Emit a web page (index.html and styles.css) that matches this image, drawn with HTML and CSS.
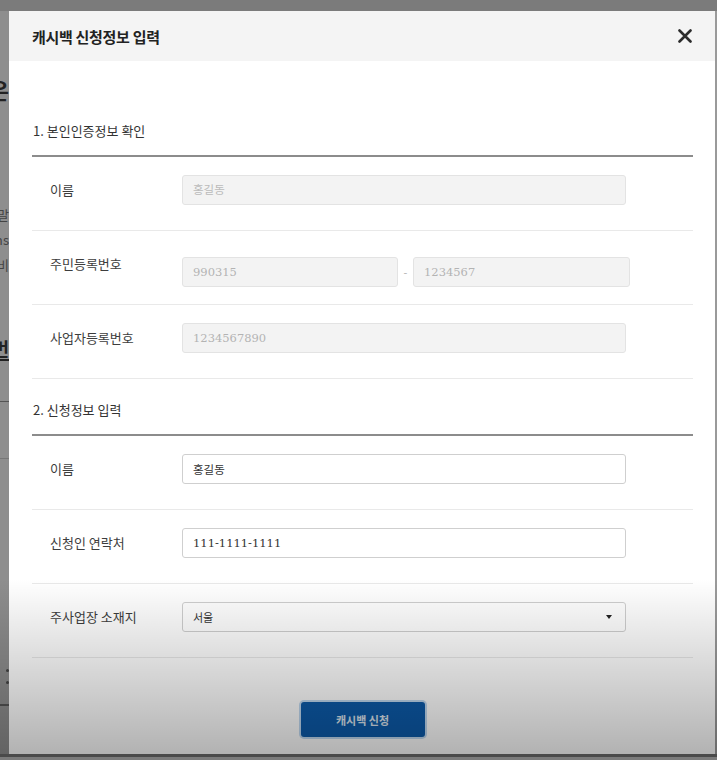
FILE: index.html
```html
<!DOCTYPE html>
<html>
<head>
    <title>캐시백 신청정보 입력</title>
    <link rel="stylesheet" href="styles.css">
</head>
<body>
    <div class="screen">
        <!-- page behind the dialog, mostly hidden -->
        <div class="behind">
            <div class="behind-line big">신청안내은</div>
            <div class="behind-line small first">안내 말</div>
            <div class="behind-line small">items</div>
            <div class="behind-line small">사업자비</div>
            <div class="behind-line bold">신청번</div>
            <div class="behind-rule r1"></div>
            <div class="behind-rule r2"></div>
            <div class="behind-dot d1"></div>
            <div class="behind-dot d2"></div>
            <div class="behind-rule r3"></div>
        </div>

        <div class="modal">
            <div class="modal-header">
                <h2>캐시백 신청정보 입력</h2>
                <button class="close" aria-label="닫기">
                    <svg width="14" height="14" viewBox="0 0 14 14">
                        <path d="M1.5 1.5 L12.5 12.5 M12.5 1.5 L1.5 12.5" stroke="#2b2b2b" stroke-width="2.6" stroke-linecap="round"/>
                    </svg>
                </button>
            </div>

            <div class="modal-body">
                <div class="section first">
                    <div class="section-title">1. 본인인증정보 확인</div>
                    <div class="row">
                        <label>이름</label>
                        <input class="field readonly" type="text" placeholder="홍길동" readonly>
                    </div>
                    <div class="row">
                        <label>주민등록번호</label>
                        <div class="split">
                            <input class="field readonly half" type="text" value="990315" readonly>
                            <span class="dash">-</span>
                            <input class="field readonly half" type="text" value="1234567" readonly>
                        </div>
                    </div>
                    <div class="row">
                        <label>사업자등록번호</label>
                        <input class="field readonly" type="text" value="1234567890" readonly>
                    </div>
                </div>

                <div class="section">
                    <div class="section-title">2. 신청정보 입력</div>
                    <div class="row">
                        <label>이름</label>
                        <input class="field" type="text" value="홍길동">
                    </div>
                    <div class="row">
                        <label>신청인 연락처</label>
                        <input class="field" type="text" value="111-1111-1111">
                    </div>
                    <div class="row">
                        <label>주사업장 소재지</label>
                        <div class="field select">
                            <span>서울</span>
                            <span class="caret"></span>
                        </div>
                    </div>
                </div>

                <div class="actions">
                    <button class="submit">캐시백 신청</button>
                </div>
            </div>
        </div>
        <div class="edge"></div>
    </div>
</body>
</html>
```

FILE: styles.css
```css
body {
    margin: 0;
    font-family: "Noto Sans CJK KR", "Noto Sans", sans-serif;
    background-color: #7b7b7b;
    overflow: hidden;
}
.screen {
    position: relative;
    display: flex;
    height: 757px;
    padding-top: 11px;
    box-sizing: border-box;
    overflow: hidden;
    border-bottom: 3px solid #4a4a4a;
    background-color: #7b7b7b;
}

/* bottom fade over everything */
.screen::after {
    content: "";
    position: absolute;
    left: 0;
    right: 0;
    bottom: 0;
    height: 175px;
    background: linear-gradient(to bottom, rgba(0, 0, 0, 0), rgba(0, 0, 0, 0.3));
    pointer-events: none;
}

.behind {
    width: 9px;
    flex: none;
    background-color: #8e8e8e;
    overflow: hidden;
    display: flex;
    flex-direction: column;
}
.behind-line {
    display: flex;
    justify-content: flex-end;
    white-space: nowrap;
    color: #222;
}
.behind-line.big {
    margin-top: 64px;
    font-size: 22px;
    font-weight: bold;
    line-height: 28px;
}
.behind-line.small {
    font-size: 13px;
    line-height: 25px;
    color: #444;
}
.behind-line.small.first {
    margin-top: 99px;
}
.behind-line.bold {
    margin-top: 60px;
    font-size: 18px;
    font-weight: bold;
    line-height: 22px;
    border-bottom: 2px solid #222;
}
.behind-rule {
    height: 1px;
    background-color: #555;
}
.behind-rule.r1 {
    margin-top: 40px;
}
.behind-rule.r2 {
    margin-top: 56px;
    background-color: #777;
}
.behind-rule.r3 {
    margin-top: 20px;
    height: 2px;
}
.behind-dot {
    width: 3px;
    height: 3px;
    margin-left: 6px;
    border-radius: 50%;
    background-color: #444;
}
.behind-dot.d1 {
    margin-top: 210px;
}
.behind-dot.d2 {
    margin-top: 9px;
}

.edge {
    width: 2px;
    flex: none;
    background-color: #9a9a9a;
}

.modal {
    width: 706px;
    flex: none;
    background-color: white;
}
.modal-header {
    height: 50px;
    display: flex;
    align-items: center;
    justify-content: space-between;
    padding: 0 23px 0 23px;
    background-color: #f4f4f4;
}
.modal-header h2 {
    margin: 0;
    font-size: 15px;
    font-weight: bold;
    color: #222;
    letter-spacing: -0.3px;
}
.close {
    border: none;
    background: none;
    padding: 0;
    width: 14px;
    height: 14px;
    display: flex;
    cursor: pointer;
}

.modal-body {
    padding: 60px 22px 0 23px;
}
.section + .section {
    margin-top: 21px;
}
.section-title {
    padding: 0 0 14px 1px;
    font-size: 13px;
    line-height: 20px;
    color: #333;
    border-bottom: 2px solid #8c8c8c;
}
.row {
    display: flex;
    align-items: center;
    height: 74px;
    padding-bottom: 8px;
    box-sizing: border-box;
    border-bottom: 1px solid #e9e9e9;
}
.row label {
    width: 132px;
    padding-left: 18px;
    flex: none;
    font-size: 13px;
    color: #3d3d3d;
}
.field {
    width: 444px;
    height: 30px;
    box-sizing: border-box;
    padding: 0 10px;
    border: 1px solid #cfcfcf;
    border-radius: 3px;
    background-color: white;
    font-family: "DejaVu Serif", "Noto Sans CJK KR", serif;
    font-size: 11.5px;
    color: #333;
    outline: none;
}
.field.readonly {
    background-color: #f3f3f3;
    border-color: #e3e3e3;
    color: #b3b3b3;
}
.field.readonly::placeholder {
    color: #bbb;
}
.split {
    display: flex;
    align-items: center;
    margin-top: 16px;
}
.field.half {
    width: 216px;
}
.split .field.half:last-child {
    width: 217px;
}
.dash {
    width: 15px;
    text-align: center;
    font-size: 11px;
    color: #b0b0b0;
}
.select {
    display: flex;
    align-items: center;
    justify-content: space-between;
    font-family: "Noto Sans CJK KR", sans-serif;
    font-size: 11px;
}
.caret {
    width: 0;
    height: 0;
    margin-right: 3px;
    border-left: 3.5px solid transparent;
    border-right: 3.5px solid transparent;
    border-top: 4px solid #222;
}

.actions {
    display: flex;
    justify-content: center;
    padding-top: 44px;
}
.submit {
    width: 124px;
    height: 35px;
    border: none;
    border-radius: 3px;
    background-color: #0c5aa9;
    box-shadow: 0 0 0 2px rgba(140, 185, 230, 0.55);
    color: #dde5ef;
    font-family: "Noto Sans CJK KR", sans-serif;
    font-size: 11px;
    font-weight: bold;
    cursor: pointer;
}
```
